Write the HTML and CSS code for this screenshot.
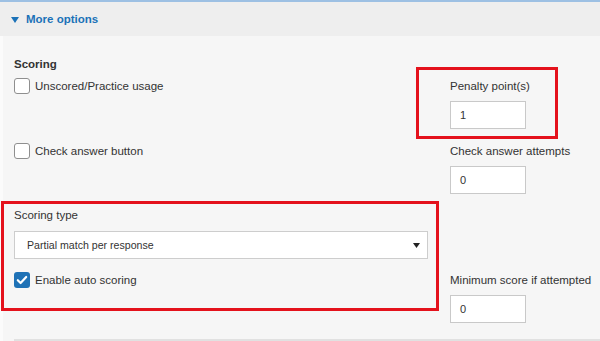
FILE: index.html
```html
<!DOCTYPE html>
<html lang="en">
<head>
    <meta charset="UTF-8">
    <meta name="viewport" content="width=device-width, initial-scale=1.0">
    <title>More options</title>
    <link rel="stylesheet" href="styles.css">
</head>
<body>
    <div class="page">
        <div class="header">
            <svg class="caret" width="8" height="6" viewBox="0 0 8 6"><polygon points="0,0 8,0 4,6" fill="#1b72b8"/></svg>
            <span>More options</span>
        </div>

        <div class="panel">
            <h3 class="section-title">Scoring</h3>

            <div class="row row-first">
                <label class="check"><span class="box"></span>Unscored/Practice usage</label>
                <div class="field callout callout-small">
                    <div class="field-label">Penalty point(s)</div>
                    <div class="input">1</div>
                </div>
            </div>

            <div class="row row-second">
                <label class="check"><span class="box"></span>Check answer button</label>
                <div class="field">
                    <div class="field-label">Check answer attempts</div>
                    <div class="input">0</div>
                </div>
            </div>

            <div class="row row-third">
                <div class="callout callout-wide">
                    <div class="field-label">Scoring type</div>
                    <div class="select">
                        <span>Partial match per response</span>
                        <svg width="7" height="5" viewBox="0 0 7 5"><polygon points="0,0 7,0 3.5,5" fill="#222"/></svg>
                    </div>
                    <label class="check check-auto">
                        <span class="box checked">
                            <svg width="16" height="16" viewBox="0 0 16 16"><polyline points="3.8,8.2 6.6,11 12.2,5" fill="none" stroke="#fff" stroke-width="2.2" stroke-linecap="round" stroke-linejoin="round"/></svg>
                        </span>Enable auto scoring
                    </label>
                </div>
                <div class="field field-low">
                    <div class="field-label">Minimum score if attempted</div>
                    <div class="input">0</div>
                </div>
            </div>

            <div class="divider"></div>
        </div>
    </div>
</body>
</html>
```

FILE: styles.css
```css
body {
    margin: 0;
    font-family: "Liberation Sans", Arial, sans-serif;
    font-size: 11.5px;
    line-height: 16px;
    color: #333;
    background-color: #f6f6f6;
    overflow: hidden;
}
.page {
    border-left: 3px solid #fbfbfb;
    height: 341px;
    box-sizing: border-box;
}
.header {
    height: 34px;
    border-top: 2px solid #9dc0e3;
    margin-left: -3px;
    padding-left: 11px;
    background-color: #eeeeee;
    display: flex;
    align-items: center;
    gap: 7px;
    color: #1b72b8;
    font-weight: bold;
}
.caret {
    margin-top: 1px;
}
.panel {
    padding: 20px 0 0 11px;
}
.section-title {
    margin: 0 0 6px;
    font-size: 11.5px;
    line-height: 16px;
    font-weight: bold;
}
.row {
    display: grid;
    grid-template-columns: 414px 1fr;
    column-gap: 22px;
    align-items: start;
}
.row-second {
    margin-top: 14px;
}
.row-third {
    margin-top: 13px;
}
.check {
    display: flex;
    align-items: center;
    gap: 5px;
    height: 16px;
}
.box {
    width: 16px;
    height: 16px;
    box-sizing: border-box;
    border: 1px solid #8f8f8f;
    border-radius: 3px;
    background: #fff;
    flex-shrink: 0;
}
.box.checked {
    border: none;
    background: #1f72b6;
}
.box svg {
    display: block;
}
.field-label {
    height: 16px;
    white-space: nowrap;
}
.input {
    margin-top: 7px;
    width: 76px;
    height: 28px;
    box-sizing: border-box;
    border: 1px solid #c9c9c9;
    background: #fff;
    padding-left: 9px;
    display: flex;
    align-items: center;
    font-size: 11px;
}
.callout {
    border: 3px solid #e4121c;
    box-sizing: border-box;
}
.callout-small {
    width: 142px;
    margin: -11px 0 -10px -34px;
    padding: 8px 0 7px 31px;
}
.callout-wide {
    width: 438px;
    margin: -6px 0 0 -13px;
    padding: 3px 8px 20px 10px;
}
.select {
    margin-top: 8px;
    height: 28px;
    box-sizing: border-box;
    border: 1px solid #cdcdcd;
    background: #fff;
    display: flex;
    align-items: center;
    justify-content: space-between;
    padding: 0 7px 0 12px;
    font-size: 10.6px;
}
.check-auto {
    margin-top: 13px;
}
.field-low {
    padding-top: 65px;
}
.divider {
    margin-top: 16px;
    height: 2px;
    background: #e1e1e1;
}
```
